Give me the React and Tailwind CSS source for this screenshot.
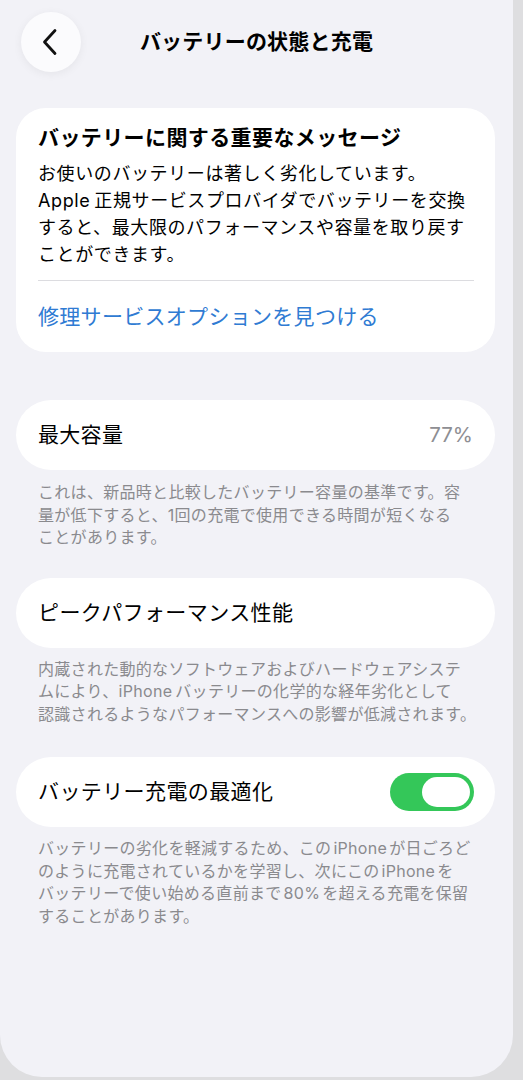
import React from "react";

const FONT = { fontFamily: '"Inter", "Noto Sans CJK JP", sans-serif' };

function Footer({ lines, className = "" }) {
  return (
    <div className={`pl-[38px] pr-4 text-[16px] leading-[22.5px] text-[#8a8a8e] tracking-[0.3px] ${className}`}>
      {lines.map((l, i) => (
        <div key={i} className="whitespace-nowrap">{l}</div>
      ))}
    </div>
  );
}

const Lat = ({ children }) => <span className="mx-[2px]">{children}</span>;

export default function App() {
  return (
    <div className="w-[523px] h-[1080px] bg-[#dedee0] flex overflow-hidden" style={FONT}>
      <div className="w-[513px] h-[1077px] bg-[#f2f2f7] rounded-b-[42px] flex flex-col text-black">
        {/* Header */}
        <div className="relative h-[108px] shrink-0">
          <div className="absolute left-[21px] top-[12px] w-[60px] h-[60px] rounded-full bg-[#fbfbfd] shadow-[0_2px_10px_rgba(0,0,0,0.06)] flex items-center justify-center">
            <svg width="16" height="28" viewBox="0 0 16 28" className="mr-[3px]">
              <path d="M13 2.5 L2.5 14 L13 25.5" fill="none" stroke="#111" strokeWidth="2.8" strokeLinecap="round" strokeLinejoin="round" />
            </svg>
          </div>
          <div className="absolute left-0 right-0 top-[27px] text-center text-[21px] leading-[30px] font-bold tracking-[0.2px]">
            バッテリーの状態と充電
          </div>
        </div>

        {/* Card 1 */}
        <div className="ml-4 w-[479px] bg-white rounded-[30px] pl-[22px] pr-[21px] pt-[15px] pb-[21px]">
          <div className="text-[21px] leading-[29px] font-bold tracking-[0.4px]">バッテリーに関する重要なメッセージ</div>
          <div className="mt-[8px] text-[18px] leading-[27px] tracking-[0.6px]">
            <div className="whitespace-nowrap">お使いのバッテリーは著しく劣化しています。</div>
            <div className="whitespace-nowrap">Apple<span className="ml-[4px]">正規サービスプロバイダでバッテリーを交換</span></div>
            <div className="whitespace-nowrap">すると、最大限のパフォーマンスや容量を取り戻す</div>
            <div className="whitespace-nowrap">ことができます。</div>
          </div>
          <div className="mt-[12px] h-px bg-[#dcdce0]" />
          <div className="mt-[22px] text-[21px] leading-[28px] text-[#2f7bd3] tracking-[0.3px]">修理サービスオプションを見つける</div>
        </div>

        {/* Card 2 */}
        <div className="mt-[48px] ml-4 w-[479px] h-[70px] bg-white rounded-full pl-[22px] pr-[22px] flex items-center justify-between">
          <div className="text-[21px] tracking-[0.3px]">最大容量</div>
          <div className="text-[20.5px] text-[#8e8e93]">77%</div>
        </div>
        <Footer
          className="mt-[11px]"
          lines={[
            "これは、新品時と比較したバッテリー容量の基準です。容",
            "量が低下すると、1回の充電で使用できる時間が短くなる",
            "ことがあります。",
          ]}
        />

        {/* Card 3 */}
        <div className="mt-[29px] ml-4 w-[479px] h-[70px] bg-white rounded-full pl-[22px] pr-[22px] flex items-center">
          <div className="text-[21px] tracking-[0.4px]">ピークパフォーマンス性能</div>
        </div>
        <Footer
          className="mt-[10px]"
          lines={[
            "内蔵された動的なソフトウェアおよびハードウェアシステ",
            <>ムにより、<span className="mr-[3px]">iPhone</span>バッテリーの化学的な経年劣化として</>,
            "認識されるようなパフォーマンスへの影響が低減されます。",
          ]}
        />

        {/* Card 4 */}
        <div className="mt-[32px] ml-4 w-[479px] h-[70px] bg-white rounded-full pl-[22px] pr-[21px] flex items-center justify-between">
          <div className="text-[21px] tracking-[0.4px]">バッテリー充電の最適化</div>
          <div className="w-[84px] h-[38px] rounded-full bg-[#34c759] flex items-center justify-end pr-[4px]">
            <div className="w-[48px] h-[30px] rounded-full bg-white" />
          </div>
        </div>
        <Footer
          className="mt-[10px]"
          lines={[
            <>バッテリーの劣化を軽減するため、この<Lat>iPhone</Lat>が日ごろど</>,
            <>のように充電されているかを学習し、次にこの<Lat>iPhone</Lat>を</>,
            <>バッテリーで使い始める直前まで<Lat>80%</Lat>を超える充電を保留</>,
            "することがあります。",
          ]}
        />
      </div>
    </div>
  );
}
